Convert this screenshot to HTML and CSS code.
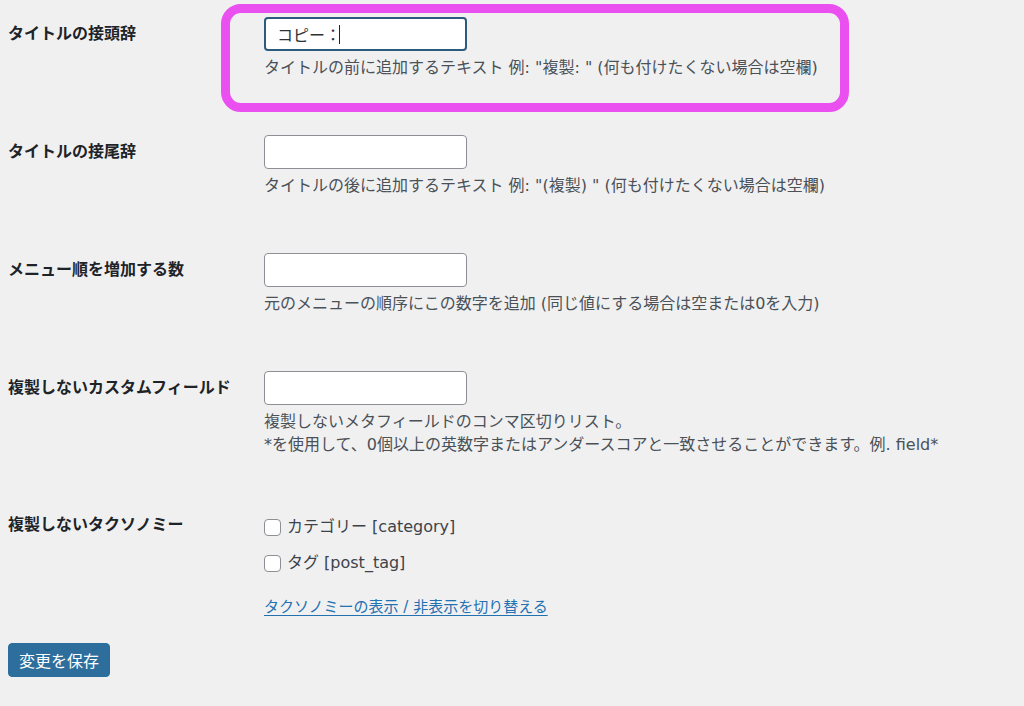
FILE: index.html
```html
<!DOCTYPE html>
<html lang="ja">
<head>
<meta charset="utf-8">
<title>設定</title>
<link rel="stylesheet" href="styles.css">
</head>
<body>
<form class="settings">
  <div class="row">
    <div class="label">タイトルの接頭辞</div>
    <div class="field">
      <span class="input-wrap"><input class="text focus" type="text" value="コピー："><span class="caret"></span></span>
      <p class="desc">タイトルの前に追加するテキスト 例: "複製: " (何も付けたくない場合は空欄)</p>
    </div>
    <div class="highlight"></div>
  </div>
  <div class="row">
    <div class="label">タイトルの接尾辞</div>
    <div class="field">
      <input class="text" type="text" value="">
      <p class="desc">タイトルの後に追加するテキスト 例: "(複製) " (何も付けたくない場合は空欄)</p>
    </div>
  </div>
  <div class="row">
    <div class="label">メニュー順を増加する数</div>
    <div class="field">
      <input class="text" type="text" value="">
      <p class="desc">元のメニューの順序にこの数字を追加 (同じ値にする場合は空または0を入力)</p>
    </div>
  </div>
  <div class="row">
    <div class="label">複製しないカスタムフィールド</div>
    <div class="field">
      <input class="text" type="text" value="">
      <p class="desc">複製しないメタフィールドのコンマ区切りリスト。<br>*を使用して、0個以上の英数字またはアンダースコアと一致させることができます。例. field*</p>
    </div>
  </div>
  <div class="row tax">
    <div class="label">複製しないタクソノミー</div>
    <div class="field">
      <label class="check"><span class="box"></span>カテゴリー [category]</label>
      <label class="check"><span class="box"></span>タグ [post_tag]</label>
      <a class="toggle" href="#">タクソノミーの表示 / 非表示を切り替える</a>
    </div>
  </div>
  <div class="submit">
    <button type="button" class="button">変更を保存</button>
  </div>
</form>
</body>
</html>
```
FILE: styles.css
```css
html, body {
  margin: 0;
  padding: 0;
  background: #f0f0f1;
}
body {
  font-family: "DejaVu Sans", "Noto Sans CJK JP", sans-serif;
  font-size: 16px;
  color: #3c434a;
  width: 1024px;
  height: 706px;
  overflow: hidden;
}
.settings {
  padding-left: 8px;
}
.row {
  position: relative;
  display: grid;
  grid-template-columns: 256px 1fr;
  padding: 17px 0 39px;
}
.label {
  font-weight: 700;
  color: #1d2327;
  line-height: 34px;
  white-space: nowrap;
}
.field {
  display: flex;
  flex-direction: column;
  align-items: flex-start;
}
.input-wrap {
  position: relative;
  display: inline-block;
}
.text {
  box-sizing: border-box;
  width: 203px;
  height: 34px;
  margin: 0;
  padding: 0 12px;
  border: 1px solid #8c8f94;
  border-radius: 4px;
  background: #fff;
  font-family: inherit;
  font-size: 16px;
  color: #2c3338;
  outline: none;
}
.text.focus {
  border: 2px solid #2d5b7c;
  padding-left: 11px;
}
.caret {
  position: absolute;
  left: 75px;
  top: 8px;
  width: 1px;
  height: 19px;
  background: #1d2327;
}
.desc {
  margin: 5px 0 0;
  line-height: 23px;
  color: #4a5157;
  white-space: nowrap;
}
.highlight {
  position: absolute;
  left: 213px;
  top: 4px;
  width: 610px;
  height: 90px;
  border: 9px solid #ea4ff0;
  border-radius: 20px;
  pointer-events: none;
}
.row.tax {
  padding: 17px 0 0;
}
.row.tax .label {
  line-height: 26px;
}
.check {
  display: flex;
  align-items: center;
  height: 30px;
  margin-bottom: 6px;
  color: #3c434a;
  line-height: 30px;
}
.box {
  box-sizing: border-box;
  width: 17px;
  height: 17px;
  margin-right: 6px;
  border: 1px solid #8c8f94;
  border-radius: 4px;
  background: #fff;
  flex: none;
}
.toggle {
  margin-top: 12px;
  font-size: 15px;
  line-height: 23px;
  color: #2271b1;
  text-decoration: underline;
  text-underline-offset: 3px;
}
.submit {
  padding-top: 24px;
}
.button {
  box-sizing: border-box;
  width: 102px;
  height: 34px;
  padding: 0;
  border: 1px solid #2a6d9e;
  border-radius: 4px;
  background: #2d6e9c;
  color: #fff;
  font-family: inherit;
  font-size: 16px;
  cursor: pointer;
}
```
